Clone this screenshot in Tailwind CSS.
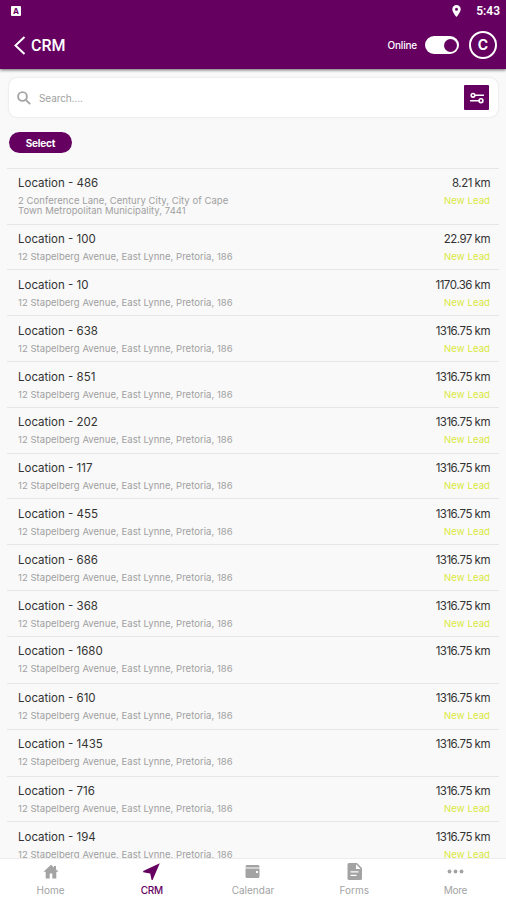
<!DOCTYPE html>
<html lang="en">
<head>
    <meta charset="UTF-8">
    <meta name="viewport" content="width=device-width, initial-scale=1.0">
    <script src="https://cdn.jsdelivr.net/npm/@tailwindcss/browser@4"></script>
    <title>CRM</title>
</head>
<body class="bg-[#f9f9f9] font-['Inter',sans-serif]">
    <div class="flex flex-col h-[900px] w-[506px] overflow-hidden">
        <header class="shrink-0 h-[69px] bg-[#650061] text-white shadow-[0_1px_3px_rgba(0,0,0,0.6)]">
            <!-- Status bar -->
            <div class="flex items-center justify-between h-[22px] pl-[11px] pr-[6px]">
                <div class="flex items-center justify-center size-[10px] rounded-[1px] bg-white text-[#650061] text-[8px] font-bold leading-none">A</div>
                <div class="flex items-center gap-[15px]">
                    <svg class="w-[9px] h-[12px]" viewBox="0 0 14 20" fill="currentColor"><path fill-rule="evenodd" d="M7 0a7 7 0 0 0-7 7c0 5.200 7 13 7 13s7-7.800 7-13a7 7 0 0 0-7-7zm0 4.500a2.500 2.500 0 1 1 0 5 2.500 2.500 0 0 1 0-5z"/></svg>
                    <span class="font-['Roboto',sans-serif] text-[12px] font-semibold leading-none">5:43</span>
                </div>
            </div>
            <!-- Title bar -->
            <div class="flex items-center h-[46px] pl-[14px] pr-[9px]">
                <svg class="w-[12px] h-[19px]" viewBox="0 0 12 19" fill="none" stroke="currentColor" stroke-width="2"><path d="M10.500 1L1.500 9.500l9 8.500"/></svg>
                <h1 class="mt-[2px] ml-[5px] font-['Roboto',sans-serif] text-[16px] font-medium leading-none">CRM</h1>
                <span class="ml-auto text-[10px] font-medium leading-none tracking-[-0.2px]">Online</span>
                <div class="ml-[8px] flex items-center justify-end w-[34px] h-[18px] rounded-full bg-white pr-[2px]">
                    <div class="size-[13px] rounded-full bg-[#650061]"></div>
                </div>
                <div class="ml-[10px] flex items-center justify-center size-[28px] rounded-full border-2 border-white text-[14px] font-bold leading-none">C</div>
            </div>
        </header>

        <main class="flex-1 min-h-0 overflow-hidden">
            <div class="flex items-center h-[39px] mt-[9px] ml-[9px] mr-[8px] pl-[8px] pr-[9px] rounded-[8px] bg-white shadow-[0_0_2px_rgba(0,0,0,0.16)]">
                <svg class="size-[14px] text-[#a5a5a5]" viewBox="0 0 14 14" fill="none" stroke="currentColor" stroke-width="1.900"><circle cx="5.500" cy="5.500" r="4.400"/><path d="M8.800 8.800l4.400 4.400"/></svg>
                <span class="ml-[8px] text-[10px] leading-none tracking-[-0.1px] text-[#a0a0a0]">Search....</span>
                <div class="ml-auto flex items-center justify-center size-[25px] rounded-[1px] bg-[#650061] text-white">
                    <svg class="w-[14px] h-[12px]" viewBox="0 0 14 12" fill="none" stroke="currentColor" stroke-width="1.600"><circle cx="3" cy="3.300" r="1.800"/><path d="M4.800 3.300H14M0 8.700h9.200"/><circle cx="11" cy="8.700" r="1.900"/></svg>
                </div>
            </div>
            <button class="block mt-[15px] ml-[9px] w-[63px] h-[21px] rounded-full bg-[#650061] text-white text-[10px] font-bold leading-none tracking-[-0.2px]">Select</button>
            <ul id="leads" class="mt-[14.500px] mx-[7px]"></ul>
        </main>

        <nav class="shrink-0 grid grid-cols-5 h-[42px] bg-white border-t border-[#ececec] text-[#a3a3a3] text-[10px] leading-none">
            <div class="flex flex-col items-center pt-[5px] gap-[6px]">
                <svg class="w-[16px] h-[15px]" viewBox="0 0 16 15" fill="currentColor"><path d="M8 .8L.5 7.700h2.200V14.500h4V9.500h2.600v5h4V7.700h2.200L13 5.300V2h-2v1.500z"/></svg>
                <span>Home</span>
            </div>
            <div class="flex flex-col items-center pt-[4px] gap-[6px] text-[#650061]">
                <svg class="w-[17px] h-[17px] -mb-[1px]" viewBox="0 0 17 17" fill="currentColor"><path d="M16.800.2L.2 8v1.200l7 1.400L8.600 17h1z"/></svg>
                <span class="font-medium tracking-[-0.3px]">CRM</span>
            </div>
            <div class="flex flex-col items-center pt-[5px] gap-[6px]">
                <svg class="w-[15px] h-[15px]" viewBox="0 0 15 15" fill="currentColor"><path d="M2 1h11a1.500 1.500 0 0 1 1.500 1.500v1H.5v-1A1.500 1.500 0 0 1 2 1z"/><path fill-rule="evenodd" d="M.5 4.500h14V12.500A1.500 1.500 0 0 1 13 14H2a1.500 1.500 0 0 1-1.500-1.500zM11 7v2h2V7z"/></svg>
                <span>Calendar</span>
            </div>
            <div class="flex flex-col items-center pt-[4px] gap-[5px]">
                <svg class="w-[15px] h-[17px]" viewBox="0 0 15 17" fill="currentColor"><path fill-rule="evenodd" d="M2 0h8l5 5v10.500a1.500 1.500 0 0 1-1.500 1.500H2A1.500 1.500 0 0 1 .5 15.500v-14A1.500 1.500 0 0 1 2 0zM9 1.300V6h4.700zM3.500 8.200v1.300h8V8.200zM3.500 11.700V13h6v-1.300z"/></svg>
                <span>Forms</span>
            </div>
            <div class="flex flex-col items-center pt-[5px] gap-[6px]">
                <svg class="w-[17px] h-[15px]" viewBox="0 0 17 15" fill="currentColor"><circle cx="2.500" cy="7.500" r="1.900"/><circle cx="8.500" cy="7.500" r="1.900"/><circle cx="14.500" cy="7.500" r="1.900"/></svg>
                <span class="tracking-[-0.3px]">More</span>
            </div>
        </nav>
    </div>

    <script>
        const home = "12 Stapelberg Avenue, East Lynne, Pretoria, 186";
        // number, distance, status, row height, address
        const leads = [
            [486, "8.21", "New Lead", 56.2, "2 Conference Lane, Century City, City of Cape<br>Town Metropolitan Municipality, 7441"],
            [100, "22.97", "New Lead", 45.8, home],
            [10, "1170.36", "New Lead", 45.8, home],
            [638, "1316.75", "New Lead", 45.8, home],
            [851, "1316.75", "New Lead", 45.8, home],
            [202, "1316.75", "New Lead", 45.8, home],
            [117, "1316.75", "New Lead", 45.8, home],
            [455, "1316.75", "New Lead", 45.8, home],
            [686, "1316.75", "New Lead", 45.8, home],
            [368, "1316.75", "New Lead", 45.8, home],
            [1680, "1316.75", "", 47, home],
            [610, "1316.75", "New Lead", 45.8, home],
            [1435, "1316.75", "", 47, home],
            [716, "1316.75", "New Lead", 45.8, home],
            [194, "1316.75", "New Lead", 45.8, home]
        ];
        document.getElementById("leads").innerHTML = leads.map(([id, km, status, height, address]) => `
            <li class="flex justify-between border-t border-[#e6e6e6] pt-[8.5px] pl-[11px] pr-[9px] whitespace-nowrap" style="height:${height}px">
                <div>
                    <p class="text-[11.5px] leading-[13px] text-[#333]">Location - ${id}</p>
                    <p class="mt-[6px] text-[9.5px] leading-[10px] tracking-[0.04px] text-[#a0a0a0]">${address}</p>
                </div>
                <div class="text-right">
                    <p class="text-[11.5px] leading-[13px] tracking-[-0.5px] text-[#333]">${km} km</p>
                    <p class="mt-[6px] text-[9.5px] leading-[10px] tracking-[0.1px] text-[#d9e83a]">${status}</p>
                </div>
            </li>`).join("");
    </script>
</body>
</html>
